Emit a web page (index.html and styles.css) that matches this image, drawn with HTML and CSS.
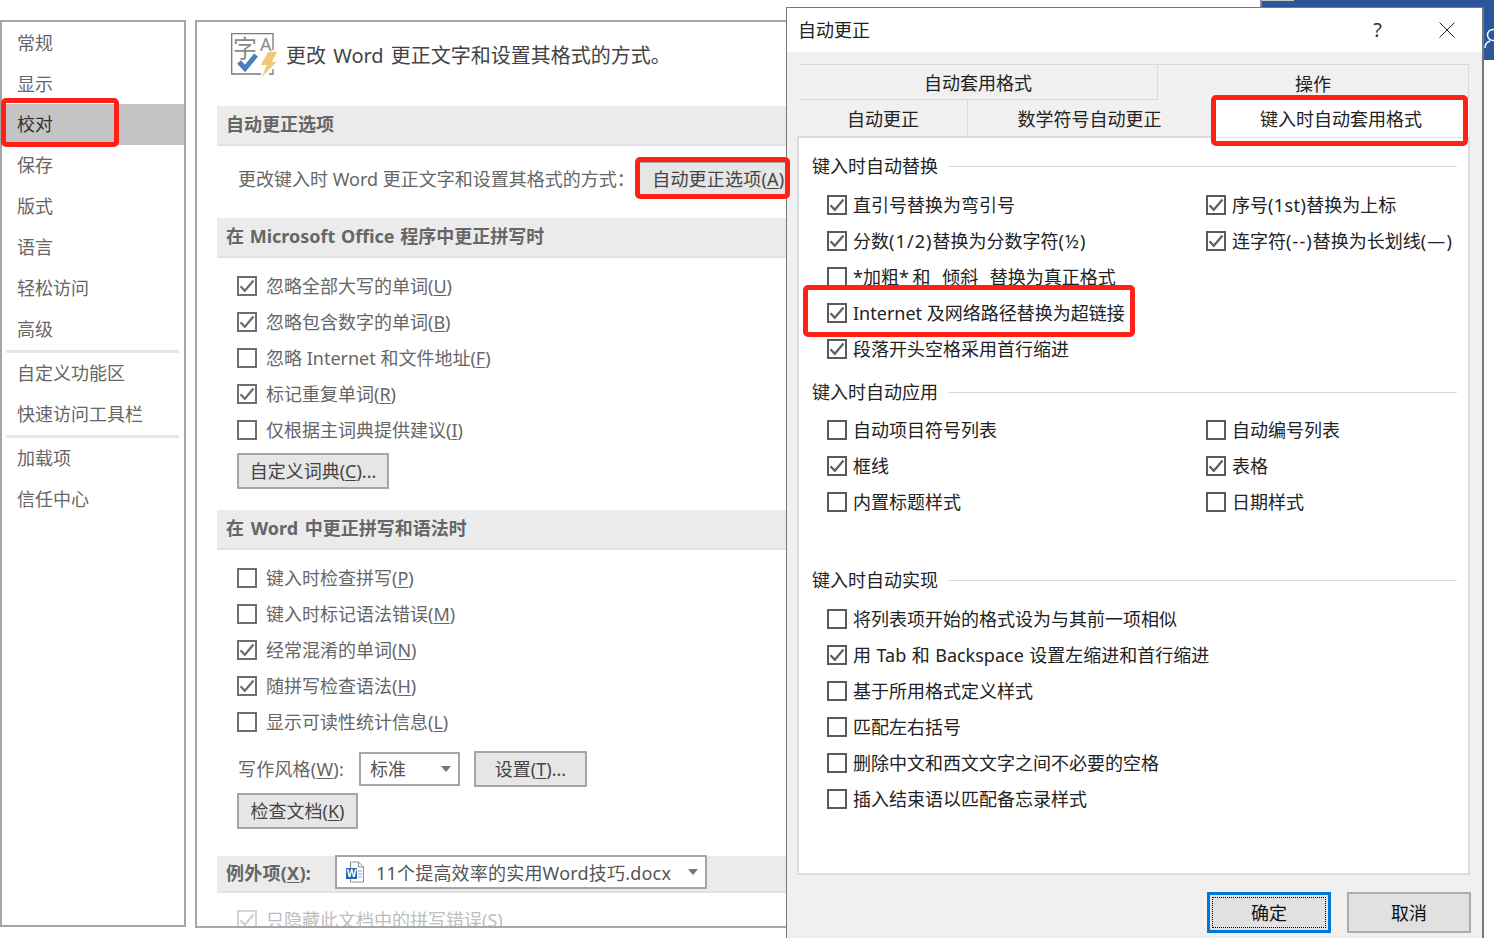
FILE: index.html
```html
<!DOCTYPE html>
<html lang="zh-CN">
<head>
<meta charset="utf-8">
<title>Word 选项 - 校对</title>
<link rel="stylesheet" href="styles.css">
</head>
<body>
<svg class="defs" width="0" height="0" aria-hidden="true"><defs><symbol id="tick" viewBox="0 0 16 16"><path d="M1.500 8.200 5.800 12.800 14.500 2.500" fill="none" stroke="currentColor" stroke-width="2.200"/></symbol></defs></svg>

<div class="backdrop">
  <nav class="nav">
    <div class="nav-item nav-first">常规</div>
    <div class="nav-item nav-first">显示</div>
    <div class="nav-item is-current">校对</div>
    <div class="nav-item">保存</div>
    <div class="nav-item">版式</div>
    <div class="nav-item">语言</div>
    <div class="nav-item">轻松访问</div>
    <div class="nav-item">高级</div>
    <div class="nav-sep"></div>
    <div class="nav-item">自定义功能区</div>
    <div class="nav-item">快速访问工具栏</div>
    <div class="nav-sep"></div>
    <div class="nav-item">加载项</div>
    <div class="nav-item">信任中心</div>
  </nav>

  <main class="main">
    <header class="main-head">
      <svg class="head-icon" width="47" height="46" viewBox="0 0 47 46">
        <path d="M42 17V.7H.7V41H30M38 41h4v-5" fill="none" stroke="#7a7a7a" stroke-width="1.300"/>
        <text class="ico-zi" x="2" y="24">字</text>
        <text class="ico-a" x="29" y="18">A</text>
        <path d="M8 29l6 6.500L25 22" fill="none" stroke="#4a7ebb" stroke-width="5"/>
        <path d="M37.300 18.700h9L40.700 28.700h5L30.700 44.300 35.700 32h-6z" fill="#f0c87a"/>
      </svg>
      <h1 class="main-title">更改 Word 更正文字和设置其格式的方式。</h1>
    </header>

    <h2 class="bar">自动更正选项</h2>
    <div class="autocorrect-row">
      <span>更改键入时 Word 更正文字和设置其格式的方式：</span>
      <button class="btn btn-flush">自动更正选项(<u>A</u>)</button>
    </div>

    <h2 class="bar">在 Microsoft Office 程序中更正拼写时</h2>
    <div class="opts">
      <label class="row"><span class="cb"><svg width="16" height="16"><use href="#tick"/></svg></span><span>忽略全部大写的单词(<u>U</u>)</span></label>
      <label class="row"><span class="cb"><svg width="16" height="16"><use href="#tick"/></svg></span><span>忽略包含数字的单词(<u>B</u>)</span></label>
      <label class="row"><span class="cb"></span><span>忽略 Internet 和文件地址(<u>F</u>)</span></label>
      <label class="row"><span class="cb"><svg width="16" height="16"><use href="#tick"/></svg></span><span>标记重复单词(<u>R</u>)</span></label>
      <label class="row"><span class="cb"></span><span>仅根据主词典提供建议(<u>I</u>)</span></label>
      <button class="btn btn-dict">自定义词典(<u>C</u>)...</button>
    </div>

    <h2 class="bar bar-3">在 Word 中更正拼写和语法时</h2>
    <div class="opts opts-3">
      <label class="row"><span class="cb"></span><span>键入时检查拼写(<u>P</u>)</span></label>
      <label class="row"><span class="cb"></span><span>键入时标记语法错误(<u>M</u>)</span></label>
      <label class="row"><span class="cb"><svg width="16" height="16"><use href="#tick"/></svg></span><span>经常混淆的单词(<u>N</u>)</span></label>
      <label class="row"><span class="cb"><svg width="16" height="16"><use href="#tick"/></svg></span><span>随拼写检查语法(<u>H</u>)</span></label>
      <label class="row"><span class="cb"></span><span>显示可读性统计信息(<u>L</u>)</span></label>
      <div class="style-row">
        <span class="style-label">写作风格(<u>W</u>):</span>
        <span class="select select-style">标准</span>
        <button class="btn btn-set">设置(<u>T</u>)...</button>
      </div>
      <button class="btn btn-check">检查文档(<u>K</u>)</button>
    </div>

    <div class="bar except">
      <span class="except-label">例外项(<u>X</u>):</span>
      <span class="select select-doc">
        <svg class="doc-icon" width="20" height="22" viewBox="0 0 20 22">
          <path d="M5.500 1h8l5 5v15h-13z" fill="#fff" stroke="#8a8a8a"/>
          <path d="M13.500 1v5h5" fill="none" stroke="#8a8a8a"/>
          <path d="M13 10h4M13 13h4M13 16h4" stroke="#7fa3d6"/>
          <rect x="1" y="7" width="11" height="11" fill="#2b5fb0"/>
          <text class="doc-w" x="6.500" y="16">W</text>
        </svg>
        <span class="doc-name">11个提高效率的实用Word技巧.docx</span>
      </span>
    </div>
    <label class="row row-off"><span class="cb"><svg width="16" height="16"><use href="#tick"/></svg></span><span>只隐藏此文档中的拼写错误(<u>S</u>)</span></label>
  </main>
</div>

<div class="word-band">
  <svg class="person" width="10" height="24" viewBox="0 0 10 24"><circle cx="9" cy="7" r="5.500" fill="none" stroke="#fff" stroke-width="1.400"/><path d="M1 20c0-4 2-6 5-7" fill="none" stroke="#fff" stroke-width="1.400"/></svg>
</div>

<section class="dialog">
  <div class="dlg-title">
    <span class="dlg-name">自动更正</span>
    <span class="dlg-help">?</span>
    <svg class="dlg-close" width="16" height="16" viewBox="0 0 16 16"><path d="M.5.500l15 15M15.500.500l-15 15" stroke="#222" fill="none"/></svg>
  </div>
  <div class="dlg-body">
    <div class="tabs">
      <div class="tab-line tab-line-top">
        <div class="tab tab-a">自动套用格式</div>
        <div class="tab tab-b">操作</div>
      </div>
      <div class="tab-line">
        <div class="tab tab-c">自动更正</div>
        <div class="tab tab-d">数学符号自动更正</div>
        <div class="tab tab-e">键入时自动套用格式</div>
      </div>
    </div>
    <div class="pane">
      <div class="grp-head">键入时自动替换</div>
      <div class="grid">
        <label class="drow"><span class="cb dcb"><svg width="16" height="16"><use href="#tick"/></svg></span><span>直引号替换为弯引号</span></label>
        <label class="drow"><span class="cb dcb"><svg width="16" height="16"><use href="#tick"/></svg></span><span>序号<span class="lat-s">(1st)</span>替换为上标</span></label>
        <label class="drow"><span class="cb dcb"><svg width="16" height="16"><use href="#tick"/></svg></span><span>分数<span class="lat">(1/2)</span>替换为分数字符<span class="lat">(½)</span></span></label>
        <label class="drow"><span class="cb dcb"><svg width="16" height="16"><use href="#tick"/></svg></span><span>连字符<span class="lat">(--)</span>替换为长划线<span class="lat">(—)</span></span></label>
        <label class="drow span2"><span class="cb dcb"></span><span class="tight">*加粗* 和 _倾斜_ 替换为真正格式</span></label>
        <label class="drow span2"><span class="cb dcb"><svg width="16" height="16"><use href="#tick"/></svg></span><span>Internet 及网络路径替换为超链接</span></label>
        <label class="drow span2"><span class="cb dcb"><svg width="16" height="16"><use href="#tick"/></svg></span><span>段落开头空格采用首行缩进</span></label>
      </div>
      <div class="grp-head grp-2">键入时自动应用</div>
      <div class="grid">
        <label class="drow"><span class="cb dcb"></span><span>自动项目符号列表</span></label>
        <label class="drow"><span class="cb dcb"></span><span>自动编号列表</span></label>
        <label class="drow"><span class="cb dcb"><svg width="16" height="16"><use href="#tick"/></svg></span><span>框线</span></label>
        <label class="drow"><span class="cb dcb"><svg width="16" height="16"><use href="#tick"/></svg></span><span>表格</span></label>
        <label class="drow"><span class="cb dcb"></span><span>内置标题样式</span></label>
        <label class="drow"><span class="cb dcb"></span><span>日期样式</span></label>
      </div>
      <div class="grp-head grp-3">键入时自动实现</div>
      <div class="grid">
        <label class="drow span2"><span class="cb dcb"></span><span>将列表项开始的格式设为与其前一项相似</span></label>
        <label class="drow span2"><span class="cb dcb"><svg width="16" height="16"><use href="#tick"/></svg></span><span class="roomy">用 Tab 和 Backspace 设置左缩进和首行缩进</span></label>
        <label class="drow span2"><span class="cb dcb"></span><span>基于所用格式定义样式</span></label>
        <label class="drow span2"><span class="cb dcb"></span><span>匹配左右括号</span></label>
        <label class="drow span2"><span class="cb dcb"></span><span>删除中文和西文文字之间不必要的空格</span></label>
        <label class="drow span2"><span class="cb dcb"></span><span>插入结束语以匹配备忘录样式</span></label>
      </div>
    </div>
    <div class="dlg-foot">
      <button class="dbtn dbtn-ok"><span class="focus-ring">确定</span></button>
      <button class="dbtn">取消</button>
    </div>
  </div>
</section>

<div class="mark mark-nav"></div>
<div class="mark mark-btn"></div>
<div class="mark mark-tab"></div>
<div class="mark mark-link"></div>
</body>
</html>
```

FILE: styles.css
```css
* { box-sizing: border-box; }
html, body { margin: 0; width: 1494px; height: 938px; overflow: hidden; background: #fff; }
body {
  position: relative;
  font-family: "Noto Sans", "Noto Sans CJK SC", sans-serif;
  font-size: 18px;
  line-height: 24px;
  color: #666;
}
u { text-underline-offset: 2px; }
.defs { position: absolute; }

/* ---- options window behind the dialog ---- */
.backdrop { display: flex; gap: 9px; padding-top: 20px; align-items: flex-start; }
.nav {
  flex: 0 0 186px;
  height: 907px;
  border: 2px solid #a6a6a6;
}
.nav-item { height: 41px; padding-left: 15px; line-height: 41px; white-space: nowrap; }
.nav-first { line-height: 43px; }
.nav-item.is-current { background: #c4c4c4; color: #333; }
.nav-sep { height: 3px; margin: 0 5px 0 4px; background: #e6e6e8; }

.main {
  flex: 0 0 1060px;
  height: 908px;
  padding-left: 20px;
  border: 2px solid #a6a6a6;
  overflow: hidden;
}
.main-head { display: flex; height: 84px; padding: 11px 0 0 14px; gap: 8px; }
.head-icon { flex: none; overflow: visible; }
.ico-zi { font-size: 24px; fill: #8a8a8a; }
.ico-a { font-size: 18px; fill: #8a8a8a; }
.main-title { margin: 10px 0 0; font-size: 20px; line-height: 26px; font-weight: 400; color: #444; word-spacing: 2px; }

.bar {
  height: 40px;
  margin: 0;
  padding: 0 0 2px 9px;
  display: flex;
  align-items: center;
  font-size: 18px;
  font-weight: 700;
  color: #666;
  background: #ebebeb;
  border-bottom: 2px solid #e2e2e6;
  word-spacing: 1px;
}
.bar-3 { word-spacing: 2px; }
.autocorrect-row {
  display: flex;
  align-items: center;
  gap: 2px;
  height: 36px;
  margin: 15px 0 21px;
  padding-left: 21px;
  white-space: nowrap;
}

.opts { padding: 10px 0 21px 20px; }
.opts-3 { padding-bottom: 27px; }
.row { display: flex; align-items: center; gap: 9px; height: 36px; white-space: nowrap; }
.cb {
  flex: none;
  width: 20px;
  height: 20px;
  display: flex;
  align-items: center;
  justify-content: center;
  border: 2px solid #6e6e6e;
  background: #fff;
  color: #6e6e6e;
}

.btn {
  display: block;
  height: 36px;
  padding: 0;
  font: inherit;
  color: #444;
  background: #e6e6e6;
  border: 2px solid #a6a6a6;
  white-space: nowrap;
}
.btn-flush { width: 163px; flex: none; letter-spacing: .2px; }
.btn-dict { width: 152px; margin-top: 5px; }
.btn-set { width: 113px; margin-left: 14px; }
.btn-check { width: 121px; margin-top: 6px; }
.style-row { display: flex; align-items: center; height: 36px; margin-top: 11px; }
.style-label { width: 122px; padding-left: 1px; letter-spacing: .2px; }

.select {
  position: relative;
  display: flex;
  align-items: center;
  background: #fff;
  border: 2px solid #a6a6a6;
  font-weight: 400;
  color: #555;
  white-space: nowrap;
  word-spacing: 0;
}
.select::after {
  content: "";
  position: absolute;
  right: 7px;
  top: 50%;
  margin-top: -3px;
  border: 5px solid transparent;
  border-top: 6px solid #777;
  border-bottom: 0;
}
.select-style { width: 101px; height: 34px; padding-left: 9px; }
.select-doc { width: 372px; height: 34px; padding-left: 8px; gap: 11px; }
.doc-name { letter-spacing: .2px; padding-top: 1px; }
.doc-w { font-size: 10px; font-weight: 700; fill: #fff; text-anchor: middle; }
.except { height: 37px; padding: 0 0 3px 9px; }
.except-label { width: 109px; padding-top: 1px; letter-spacing: .25px; }
.row-off { height: 36px; margin: 9px 0 0 20px; color: #bdbdbd; }
.row-off .cb { border-color: #d4d4d4; color: #cfcfcf; }

/* ---- blue strip of the Word window ---- */
.word-band {
  position: absolute;
  left: 1260px;
  top: 0;
  width: 234px;
  height: 60px;
  background: #2b579a;
  border-left: 2px solid #8c8c8c;
  overflow: hidden;
}
.word-band::before { content: ""; position: absolute; left: 0; top: 0; width: 32px; height: 1px; background: #c9c9c9; }
.person { position: absolute; right: 0; top: 28px; }

/* ---- autocorrect dialog ---- */
.dialog {
  position: absolute;
  left: 786px;
  top: 7px;
  width: 698px;
  height: 940px;
  border: 2px solid #777;
  border-width: 1px 2px 2px 1px;
  background: #f0f0f0;
  color: #222;
}
.dlg-title {
  display: flex;
  align-items: center;
  height: 44px;
  padding: 0 27px 0 11px;
  background: #fff;
}
.dlg-name { margin-right: auto; }
.dlg-help { margin-right: 57px; font-size: 20px; color: #333; }
.dlg-close { flex: none; }
.dlg-body { height: 893px; padding-top: 12px; }
.tabs { margin-left: 12px; width: 670px; }
.tab-line { display: flex; height: 36px; }
.tab-line-top { border-top: 1px solid #d9d9d9; border-right: 1px solid #d9d9d9; }
.tab { display: flex; align-items: center; justify-content: center; padding-top: 2px; }
.tab-a { width: 359px; border-right: 1px solid #d9d9d9; border-bottom: 1px solid #d9d9d9; }
.tab-b { flex: 1; }
.tab-c { width: 169px; border-right: 1px solid #d9d9d9; }
.tab-d { width: 243px; }
.tab-e { flex: 1; background: #fff; padding: 1px 0 0 2px; margin-top: -1px; height: 38px; }
.pane {
  width: 673px;
  height: 739px;
  margin-left: 10px;
  padding: 18px 11px 0 13px;
  background: #fff;
  border: 2px solid #dcdcdc;
}
.grp-head { display: flex; align-items: center; gap: 10px; height: 20px; margin-bottom: 11px; white-space: nowrap; }
.grp-head::after { content: ""; flex: 1; height: 1px; background: #d9d9d9; }
.grp-2 { margin-top: 15px; margin-bottom: 10px; }
.grp-3 { margin-top: 50px; }
.grid { display: grid; grid-template-columns: 379px 1fr; padding-left: 15px; }
.drow { display: flex; align-items: center; gap: 6px; height: 36px; white-space: nowrap; }
.span2 { grid-column: 1 / span 2; }
.dcb { border-color: #5a5a5a; color: #5f5f5f; }
.lat { letter-spacing: 1.100px; }
.lat-s { letter-spacing: .4px; }
.tight { word-spacing: -1px; }
.roomy { word-spacing: .8px; }

.dlg-foot { display: flex; justify-content: flex-end; gap: 16px; padding: 17px 11px 0 0; }
.dbtn {
  width: 124px;
  height: 41px;
  padding: 0;
  font: inherit;
  color: #111;
  background: #e1e1e1;
  border: 2px solid #adadad;
}
.dbtn-ok { padding: 2px; border: 3px solid #0078d7; }
.focus-ring { display: flex; align-items: center; justify-content: center; height: 100%; border: 1px dotted #000; }

/* ---- red annotation frames ---- */
.mark { position: absolute; border: 5px solid #ff2116; border-radius: 5px; }
.mark-nav { left: 1px; top: 98px; width: 118px; height: 49px; }
.mark-btn { left: 635px; top: 157px; width: 155px; height: 42px; }
.mark-tab { left: 1211px; top: 95px; width: 257px; height: 51px; }
.mark-link { left: 803px; top: 285px; width: 332px; height: 52px; }
```
